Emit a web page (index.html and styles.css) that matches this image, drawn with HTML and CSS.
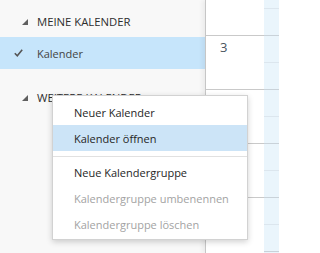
FILE: index.html
```html
<!DOCTYPE html>
<html lang="de">
<head>
<meta charset="utf-8">
<title>Kalender</title>
<link rel="stylesheet" href="styles.css">
</head>
<body>
<div class="app">
  <nav class="sidebar">
    <div class="group-head">
      <svg class="tri" width="6" height="6" viewBox="0 0 6 6"><polygon points="6,0 6,6 0,6"/></svg>
      <span>MEINE KALENDER</span>
    </div>
    <div class="cal-row selected">
      <svg class="check" width="9" height="8" viewBox="0 0 9 8"><path d="M0.8 4.2 L3.3 6.7 L8.2 0.8"/></svg>
      <span>Kalender</span>
    </div>
    <div class="group-head second">
      <svg class="tri" width="6" height="6" viewBox="0 0 6 6"><polygon points="6,0 6,6 0,6"/></svg>
      <span>WEITERE KALENDER</span>
    </div>
  </nav>
  <div class="daycol">
    <div class="cell first"></div>
    <div class="cell"><span class="daynum">3</span></div>
    <div class="cell"></div>
    <div class="cell"></div>
    <div class="cell"></div>
  </div>
  <div class="slotcol"></div>

  <ul class="menu">
    <li class="item">Neuer Kalender</li>
    <li class="item hover">Kalender öffnen</li>
    <li class="sep"></li>
    <li class="item">Neue Kalendergruppe</li>
    <li class="item disabled">Kalendergruppe umbenennen</li>
    <li class="item disabled">Kalendergruppe löschen</li>
  </ul>
</div>
</body>
</html>
```
FILE: styles.css
```css
html, body {
  margin: 0;
  padding: 0;
  background: #ffffff;
}

.app {
  position: relative;
  display: flex;
  width: 279px;
  height: 253px;
  overflow: hidden;
  font-family: "Open Sans", "Noto Sans", sans-serif;
  font-size: 11px;
}

.sidebar {
  width: 205px;
  flex: none;
  background: #f8f8f8;
  padding-top: 5px;
  box-sizing: border-box;
}

.group-head {
  height: 32px;
  display: flex;
  align-items: center;
  padding-left: 22px;
  color: #2e2e2e;
  font-size: 11.3px;
}

.group-head.second {
  margin-top: 12px;
}

.tri {
  fill: #5f5f5f;
  margin-right: 9px;
  margin-top: 1px;
}

.cal-row {
  height: 32px;
  display: flex;
  align-items: center;
  padding-left: 14px;
  color: #444444;
}

.cal-row.selected {
  background: #c6e5fb;
}

.check {
  fill: none;
  stroke: #555555;
  stroke-width: 1.6;
  margin-right: 14px;
}

.daycol {
  width: 59px;
  flex: none;
  box-sizing: border-box;
  border-left: 1px solid #c6c6c6;
  background: #ffffff;
  display: flex;
  flex-direction: column;
  box-shadow: -3px 0 4px rgba(0, 0, 0, 0.05);
}

.cell {
  height: 54px;
  flex: none;
  box-sizing: border-box;
  border-top: 1px solid #c9c9c9;
}

.cell.first {
  height: 35px;
  border-top: none;
}

.daynum {
  display: block;
  padding: 2px 0 0 14px;
  font-size: 13px;
  color: #4a5460;
}

.slotcol {
  flex: 1;
  background-color: #eaf5fc;
  background-image: repeating-linear-gradient(
    to bottom,
    transparent 0 8px,
    #dce6ee 8px 9px,
    transparent 9px 35px,
    #c9d2d9 35px 36px,
    transparent 36px 54px
  );
}

.menu {
  position: absolute;
  left: 52px;
  top: 95px;
  width: 196px;
  box-sizing: border-box;
  margin: 0;
  padding: 3px 0 2px;
  list-style: none;
  background: #ffffff;
  border: 1px solid #d2d2d2;
  box-shadow: 0 2px 6px rgba(0, 0, 0, 0.18);
  font-size: 11px;
}

.item {
  height: 26px;
  display: flex;
  align-items: center;
  padding-left: 21px;
  color: #262626;
}

.item.hover {
  background: #cce4f7;
}

.item.disabled {
  color: #a3a3a3;
}

.sep {
  height: 1px;
  margin: 5px 0 2px;
  background: #e1e1e1;
}
```
